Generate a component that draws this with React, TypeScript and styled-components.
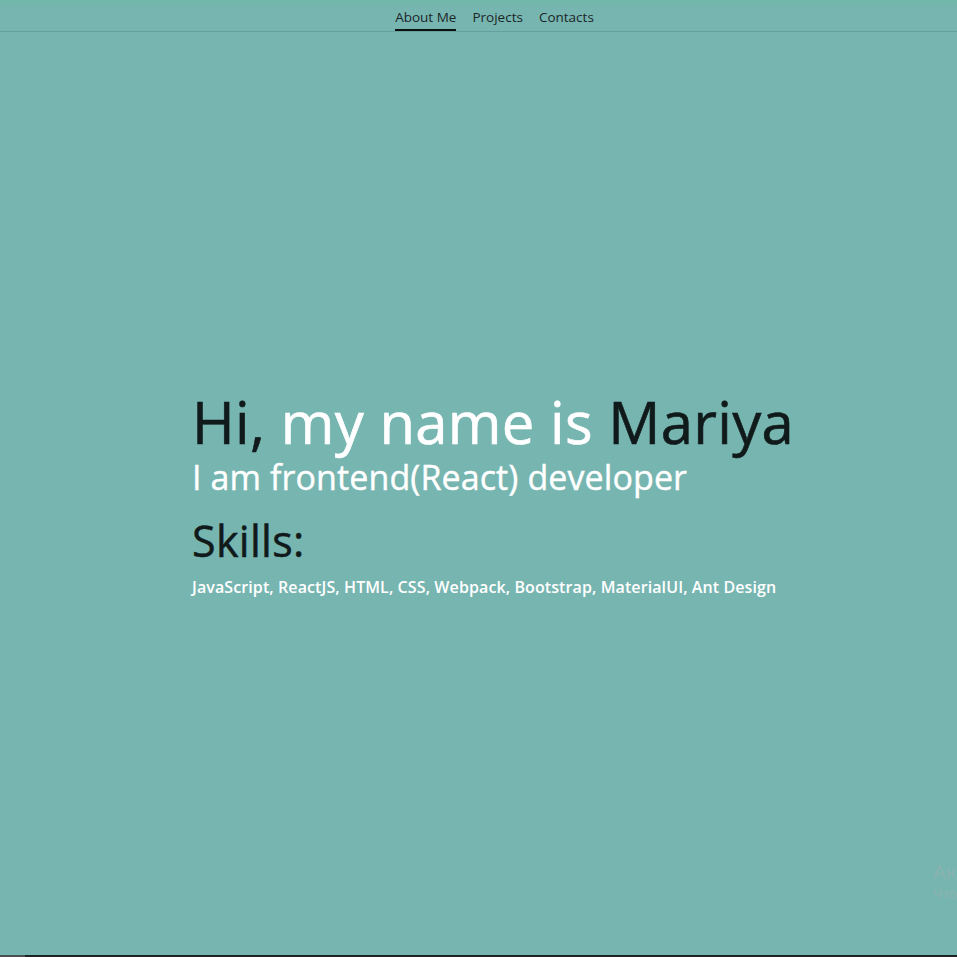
import React from "react";
import styled, { createGlobalStyle } from "styled-components";

const GlobalStyle = createGlobalStyle`
  html, body {
    margin: 0;
    padding: 0;
    height: 100%;
    overflow: hidden;
  }
  body {
    background: #77b5b1;
    font-family: "Open Sans", "Noto Sans", sans-serif;
  }
  #root {
    height: 100%;
  }
`;

const Page = styled.div`
  position: relative;
  height: 100vh;
  display: flex;
  flex-direction: column;
  background:
    linear-gradient(180deg, rgba(110, 185, 165, 0.6) 0px, rgba(119, 181, 177, 0) 10px),
    #77b5b1;
  box-sizing: border-box;
  border-bottom: 2px solid #1d2426;
`;

const NavBar = styled.nav`
  display: flex;
  justify-content: center;
  gap: 16px;
  height: 31px;
  padding-left: 32px;
  border-bottom: 1px solid #66a09c;
  box-sizing: content-box;
`;

const NavLink = styled.a<{ $active?: boolean }>`
  display: flex;
  align-items: center;
  height: 100%;
  box-sizing: border-box;
  padding-top: 4px;
  font-size: 13.5px;
  color: #1b2727;
  text-decoration: none;
  border-bottom: 2px solid ${(p) => (p.$active ? "#0b1010" : "transparent")};
  cursor: pointer;
`;

const Main = styled.main`
  flex: 1;
  display: flex;
  flex-direction: column;
  justify-content: center;
  padding-left: 192px;
  padding-top: 1px;
`;

const Title = styled.h1`
  margin: 0;
  font-size: 58px;
  font-weight: 400;
  line-height: 1.1;
  color: #111a1a;
  letter-spacing: 0.3px;
  -webkit-text-stroke: 0.6px currentColor;
`;

const Light = styled.span`
  color: #ffffff;
`;

const Subtitle = styled.h2`
  margin: 6px 0 0;
  font-size: 34px;
  font-weight: 400;
  line-height: 1.1;
  color: #ffffff;
  letter-spacing: 0.1px;
  -webkit-text-stroke: 0.4px currentColor;
`;

const SkillsTitle = styled.h3`
  margin: 18px 0 0;
  font-size: 43px;
  font-weight: 400;
  line-height: 1.2;
  color: #111a1a;
  letter-spacing: 0.3px;
  -webkit-text-stroke: 0.5px currentColor;
`;

const SkillsList = styled.p`
  margin: 10px 0 0;
  font-size: 16px;
  font-weight: 600;
  color: #ffffff;
  letter-spacing: 0.1px;
`;

const Watermark = styled.div`
  position: absolute;
  right: 0;
  bottom: 52px;
  width: 24px;
  overflow: hidden;
  white-space: nowrap;
  color: rgba(140, 178, 175, 0.95);
  font-family: "Noto Sans", sans-serif;
`;

const WmTitle = styled.div`
  font-size: 20px;
  line-height: 26px;
`;

const WmText = styled.div`
  font-size: 14px;
  line-height: 18px;
`;

const TaskThumb = styled.div`
  position: absolute;
  left: 0;
  bottom: -2px;
  width: 25px;
  height: 2px;
  background: #4a5052;
`;

export default function App() {
  return (
    <Page>
      <GlobalStyle />
      <NavBar>
        <NavLink $active>About Me</NavLink>
        <NavLink>Projects</NavLink>
        <NavLink>Contacts</NavLink>
      </NavBar>
      <Main>
        <Title>
          Hi, <Light>my name is</Light> Mariya
        </Title>
        <Subtitle>I am frontend(React) developer</Subtitle>
        <SkillsTitle>Skills:</SkillsTitle>
        <SkillsList>
          JavaScript, ReactJS, HTML, CSS, Webpack, Bootstrap, MaterialUI, Ant Design
        </SkillsList>
      </Main>
      <Watermark>
        <WmTitle>Активация</WmTitle>
        <WmText>Чтобы</WmText>
      </Watermark>
      <TaskThumb />
    </Page>
  );
}
